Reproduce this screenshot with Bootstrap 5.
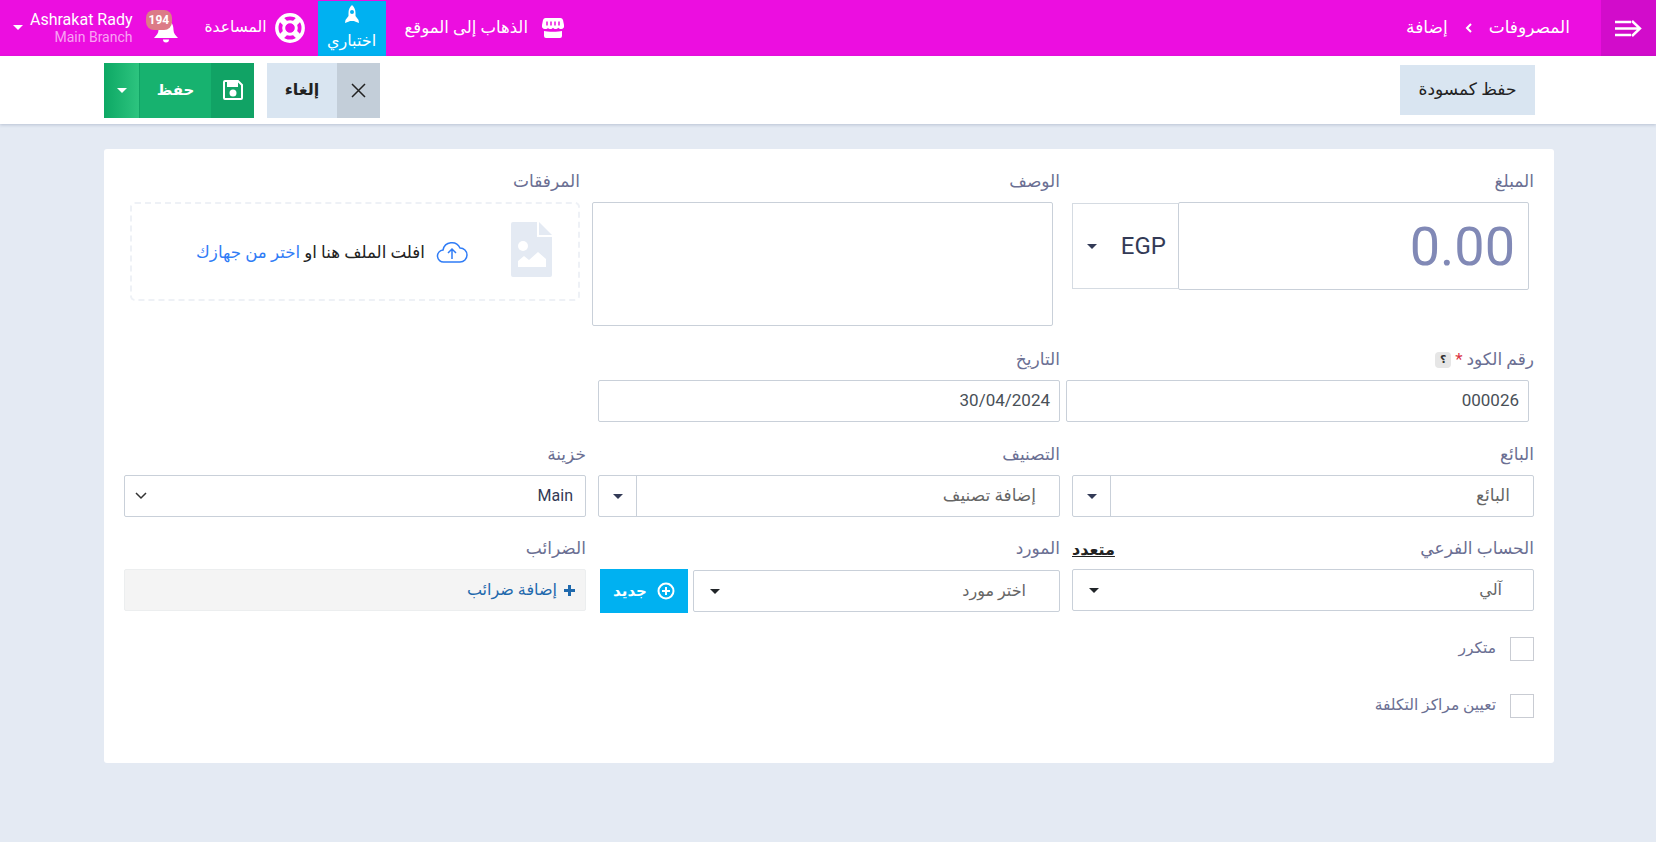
<!DOCTYPE html>
<html lang="ar" dir="rtl">
<head>
    <meta charset="UTF-8">
    <meta name="viewport" content="width=device-width, initial-scale=1.0">
    <title>إضافة مصروف</title>
    <link href="https://cdn.jsdelivr.net/npm/bootstrap@5.3.0/dist/css/bootstrap.min.css" rel="stylesheet">
    <style>
        html, body { height: 100%; }
        body { font-family: Roboto, "DejaVu Sans", sans-serif; font-size: 16px; background: #e4eaf3; color: #333a56; }
        .topbar { height: 56px; background: #ec0ee0; color: #fff; padding-left: 13px; }
        .toggle-box { width: 55px; height: 56px; background: #d20ccb; }
        .crumbs { padding-right: 31px; gap: 17px; font-size: 17px; }
        .top-link { color: #fff; text-decoration: none; }
        .site-link { font-size: 16.5px; gap: 14px; }
        .help-link { font-size: 15.5px; }
        .try-box { width: 68px; height: 55px; margin-top: 1px; margin-right: 19px; margin-left: 13px; background: #00b1f1; padding: 4px 0 3px; }
        .bell-box { margin-right: 27px; margin-left: 21px; margin-top: 6px; }
        .bell-count { top: -9px; left: -8px; background: #dc7b87; font-size: 12px; font-weight: 700; padding: 4px 3px; border-radius: 8px; }
        .user-box { line-height: 1.2; gap: 7px; }
        .user-branch { font-size: 14px; color: #f9a3f4; }
        .caret-down { width: 0; height: 0; border-left: 5px solid transparent; border-right: 5px solid transparent; border-top: 5px solid currentColor; }
        .toolbar { height: 68px; background: #fff; box-shadow: 0 1px 3px rgba(60, 80, 120, .25); padding: 0 121px 0 104px; }
        .draft-btn { width: 135px; height: 50px; background: #d9e5f1; color: #222; font-size: 17px; }
        .cancel-text { width: 70px; height: 55px; background: #d9e5f1; color: #222; font-weight: 700; }
        .cancel-x { width: 43px; height: 55px; background: #c3ced9; }
        .save-icon { width: 43px; height: 55px; background: #11a365; }
        .save-text { width: 71px; height: 55px; background: #17b26f; color: #fff; font-weight: 700; font-size: 15px; }
        .save-more { width: 36px; height: 55px; background: linear-gradient(90deg, #0da864, #2dc47f); color: #fff; border-right: 1px solid #11a365; }
        .gap-13 { gap: 13px; }
        .sheet { margin: 25px 102px 0 102px; width: 1450px; height: 614px; background: #fff; border-radius: 3px; padding: 22px 14px 0 14px; }
        .field-row { display: flex; }
        .field { width: 474px; padding: 0 6px; }
        .field-label { display: block; height: 21px; line-height: 21px; margin-bottom: 10px; color: #6b6f93; font-size: 17px; }
        .box { height: 42px; border: 1px solid #c9d0d9; border-radius: 2px; background: #fff; display: flex; align-items: center; }
        .amount-wrap { margin-right: 5px; }
        .amount-input { width: 351px; height: 88px; border: 1px solid #c9d0d9; border-radius: 2px; padding: 0 13px; font-size: 54px; color: #8189b6; }
        .currency-box { width: 106px; height: 86px; border: 1px solid #d5dbe2; border-right: 0; font-size: 24px; padding: 0 12px 0 14px; }
        .note-box { width: 461px; height: 124px; margin-right: 7px; border: 1px solid #c9d0d9; border-radius: 2px; }
        .drop-label { margin-right: 6px; }
        .drop-box { height: 99px; margin: 0 6px 0 6px; border: 2px dashed #eef1f6; border-radius: 5px; padding: 0 26px; font-size: 16.7px; color: #222; gap: 43px; }
        .drop-file { margin-top: -4px; }
        .drop-text { gap: 11px; margin-top: 2px; }
        .drop-link { color: #2f7cf6; }
        .code-box { margin-right: 5px; margin-left: -6px; padding: 0 9px; font-size: 17px; color: #495057; }
        .date-box { padding: 0 9px; font-size: 17px; color: #495057; }
        .pick-box { padding-right: 23px; color: #666; font-size: 17px; }
        .addon { width: 38px; border-right: 1px solid #c9d0d9; height: 100%; color: #333a56; }
        .main-box { padding: 0 12px 0 10px; }
        .acct-box { padding: 0 31px 0 16px; color: #666; }
        .vendor-row { gap: 5px; }
        .vendor-box { padding: 0 33px 0 16px; color: #666; width: 367px; }
        .multi-link { color: #222; font-weight: 700; }
        .new-btn { width: 88px; height: 44px; background: #00b1f1; color: #fff; font-weight: 700; font-size: 15px; gap: 10px; }
        .tax-box { background: #f4f4f4; border-color: #eceeef; color: #1f69ad; padding: 0 9px; gap: 6px; }
        .tick-box { width: 24px; height: 24px; border: 1px solid #c9ccd3; }
        .tick-text { color: #6b6f93; font-size: 15.5px; }
        .tick-row { padding: 0 6px; gap: 14px; margin-top: 33px; }
        .tick-first { margin-top: 24px; }
        .help-mark { width: 16px; height: 16px; background: #e6e6e6; border-radius: 4px; font-size: 11px; color: #333; font-weight: 700; }
        .row-a { margin-top: 23px; }
        .row-b { margin-top: 22px; }
        .row-c { margin-top: 21px; }
    </style>
</head>
<body class="d-flex flex-column">
    <header class="topbar d-flex align-items-center">
        <div class="toggle-box d-flex align-items-center justify-content-center">
            <svg width="27" height="17" viewBox="0 0 27 17" fill="none" stroke="#fff" stroke-width="2.4"><path d="M0 2h16M0 8.500h24M0 15h16M17 1l8 7.500-8 7.500"/></svg>
        </div>
        <div class="crumbs d-flex align-items-center">
            <span>المصروفات</span>
            <svg width="7" height="10" viewBox="0 0 7 10" fill="none" stroke="#fff" stroke-width="2"><path d="M6 1L2 5l4 4"/></svg>
            <span>إضافة</span>
        </div>
        <div class="d-flex align-items-center me-auto h-100">
            <a href="#" class="top-link site-link d-flex align-items-center">
                <svg width="22" height="20" viewBox="0 0 22 20" fill="#fff"><path d="M4 0h14a3 3 0 0 1 3 2l1 5a3 3 0 0 1-3 4c-1 0-2-.5-2.700-1.300-.7.8-1.800 1.300-2.800 1.300s-1.800-.5-2.500-1.300c-.7.8-1.500 1.300-2.500 1.300s-2.100-.5-2.800-1.300C6 10.500 5 11 3 11a3 3 0 0 1-3-4l1-5a3 3 0 0 1 3-2z"/><path d="M5 3.500v4M9 3.500v4M13 3.500v4M17 3.500v4" stroke="#ec0ee0" stroke-width="1.500"/><path d="M2 13c3 1 15 1 18 0v5a2 2 0 0 1-2 2H4a2 2 0 0 1-2-2z"/></svg>
                <span>الذهاب إلى الموقع</span>
            </a>
            <div class="try-box d-flex flex-column align-items-center justify-content-between">
                <svg width="16" height="19" viewBox="0 0 16 19" fill="#fff"><path d="M8 0c2.500 2 3.500 5 3.500 8v3l3 4 .5 3-4-1.500-1-.5H6l-1 .5L1 18l.5-3 3-4V8C4.500 5 5.500 2 8 0z"/><circle cx="8" cy="7" r="2" fill="#00b1f1"/></svg>
                <span>اختباري</span>
            </div>
            <a href="#" class="top-link help-link d-flex align-items-center gap-2">
                <svg width="30" height="30" viewBox="0 0 30 30" fill="none" stroke="#fff"><circle cx="15" cy="15" r="13.200" stroke-width="3.400"/><circle cx="15" cy="15" r="6.300" stroke-width="3"/><path d="M5.500 5.500l6 6M24.500 5.500l-6 6M5.500 24.500l6-6M24.500 24.500l-6-6" stroke-width="6"/></svg>
                <span>المساعدة</span>
            </a>
            <div class="bell-box position-relative d-flex">
                <svg width="24" height="24" viewBox="0 0 24 24" fill="#fff"><path d="M12 0a2 2 0 0 1 2 2c4 1 5.500 4 5.500 9 0 3 2 5.500 4.500 8H0c2.500-2.500 4.500-5 4.500-8 0-5 1.500-8 5.500-9a2 2 0 0 1 2-2z"/><path d="M9 20.500h6a3 3 0 0 1-6 0z"/></svg>
                <span class="bell-count position-absolute lh-1">194</span>
            </div>
            <div class="user-box d-flex align-items-center">
                <div class="text-end">
                    <div dir="ltr">Ashrakat Rady</div>
                    <div class="user-branch" dir="ltr">Main Branch</div>
                </div>
                <span class="caret-down"></span>
            </div>
        </div>
    </header>

    <div class="toolbar d-flex align-items-center justify-content-between">
        <button class="draft-btn border-0 d-flex align-items-center justify-content-center">حفظ كمسودة</button>
        <div class="d-flex align-items-center gap-13">
            <div class="d-flex">
                <div class="cancel-x d-flex align-items-center justify-content-center">
                    <svg width="15" height="15" viewBox="0 0 15 15" stroke="#222" stroke-width="1.500"><path d="M1 1l13 13M14 1L1 14"/></svg>
                </div>
                <div class="cancel-text d-flex align-items-center justify-content-center">إلغاء</div>
            </div>
            <div class="d-flex">
                <div class="save-icon d-flex align-items-center justify-content-center">
                    <svg width="20" height="20" viewBox="0 0 20 20" fill="none" stroke="#fff" stroke-width="2"><path d="M2 1h13l4 4v13a1 1 0 0 1-1 1H2a1 1 0 0 1-1-1V2a1 1 0 0 1 1-1z"/><path d="M5 2v4h9V2" fill="#fff"/><circle cx="10" cy="13" r="2.500" fill="#fff"/></svg>
                </div>
                <div class="save-text d-flex align-items-center justify-content-center">حفظ</div>
                <div class="save-more d-flex align-items-center justify-content-center"><span class="caret-down"></span></div>
            </div>
        </div>
    </div>

    <main class="sheet">
        <div class="field-row">
            <div class="field">
                <label class="field-label">المبلغ</label>
                <div class="amount-wrap d-flex align-items-center">
                    <div class="amount-input d-flex align-items-center">0.00</div>
                    <div class="currency-box d-flex align-items-center justify-content-between" dir="ltr">
                        <span class="caret-down"></span><span>EGP</span>
                    </div>
                </div>
            </div>
            <div class="field">
                <label class="field-label">الوصف</label>
                <div class="note-box"></div>
            </div>
            <div class="field">
                <label class="field-label drop-label">المرفقات</label>
                <div class="drop-box d-flex align-items-center">
                    <svg class="drop-file" width="41" height="55" viewBox="0 0 41 55" fill="#e4eaf3"><path d="M0 2a2 2 0 0 1 2-2h24v15h15v38a2 2 0 0 1-2 2H2a2 2 0 0 1-2-2z"/><path d="M28 0l13 13H28z"/><circle cx="12" cy="24" r="5" fill="#fff"/><path d="M7 45v-6l6-5 5 4 9-8 8 7v8z" fill="#fff"/></svg>
                    <div class="drop-text d-flex align-items-center">
                        <svg width="32" height="22" viewBox="0 0 32 22" fill="none" stroke="#2f7cf6" stroke-width="1.500"><path d="M8 21a6 6 0 0 1-1-12 9 9 0 0 1 17-2 7 7 0 0 1 0 14z"/><path d="M16 18V9M12 12l4-4 4 4"/></svg>
                        <span>افلت الملف هنا او <span class="drop-link">اختر من جهازك</span></span>
                    </div>
                </div>
            </div>
        </div>

        <div class="field-row row-a">
            <div class="field">
                <label class="field-label d-flex align-items-center gap-1">رقم الكود <span class="text-danger">*</span> <span class="help-mark d-inline-flex align-items-center justify-content-center">؟</span></label>
                <div class="box code-box">000026</div>
            </div>
            <div class="field">
                <label class="field-label">التاريخ</label>
                <div class="box date-box">30/04/2024</div>
            </div>
        </div>

        <div class="field-row row-b">
            <div class="field">
                <label class="field-label">البائع</label>
                <div class="box pick-box justify-content-between">
                    <span>البائع</span>
                    <span class="addon d-flex align-items-center justify-content-center"><span class="caret-down"></span></span>
                </div>
            </div>
            <div class="field">
                <label class="field-label">التصنيف</label>
                <div class="box pick-box justify-content-between">
                    <span>إضافة تصنيف</span>
                    <span class="addon d-flex align-items-center justify-content-center"><span class="caret-down"></span></span>
                </div>
            </div>
            <div class="field">
                <label class="field-label">خزينة</label>
                <div class="box main-box justify-content-between">
                    <span>Main</span>
                    <svg width="12" height="8" viewBox="0 0 12 8" fill="none" stroke="#333" stroke-width="1.500"><path d="M1 1l5 5 5-5"/></svg>
                </div>
            </div>
        </div>

        <div class="field-row row-c">
            <div class="field">
                <div class="d-flex justify-content-between">
                    <label class="field-label">الحساب الفرعي</label>
                    <a href="#" class="multi-link">متعدد</a>
                </div>
                <div class="box acct-box justify-content-between">
                    <span>آلي</span>
                    <span class="caret-down text-dark"></span>
                </div>
            </div>
            <div class="field">
                <label class="field-label">المورد</label>
                <div class="vendor-row d-flex align-items-center">
                    <div class="box vendor-box justify-content-between">
                        <span>اختر مورد</span>
                        <span class="caret-down text-dark"></span>
                    </div>
                    <button class="new-btn border-0 d-flex align-items-center justify-content-center">
                        <svg width="18" height="18" viewBox="0 0 18 18" fill="none" stroke="#fff" stroke-width="2"><circle cx="9" cy="9" r="7.500"/><path d="M9 5v8M5 9h8"/></svg>
                        جديد
                    </button>
                </div>
            </div>
            <div class="field">
                <label class="field-label">الضرائب</label>
                <div class="box tax-box">
                    <svg width="13" height="13" viewBox="0 0 13 13" stroke="#1f69ad" stroke-width="3"><path d="M6.500 1v11M1 6.500h11"/></svg>
                    <span>إضافة ضرائب</span>
                </div>
            </div>
        </div>

        <div class="tick-row tick-first d-flex align-items-center">
            <span class="tick-box"></span><span class="tick-text">متكرر</span>
        </div>
        <div class="tick-row d-flex align-items-center">
            <span class="tick-box"></span><span class="tick-text">تعيين مراكز التكلفة</span>
        </div>
    </main>
</body>
</html>
